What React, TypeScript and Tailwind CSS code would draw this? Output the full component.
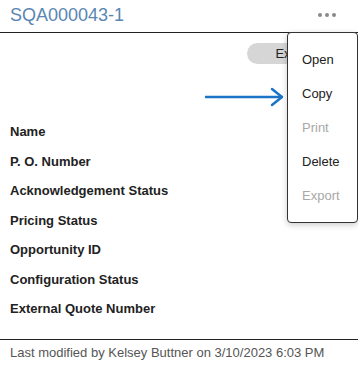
import React from 'react';

const fields = [
  'Name',
  'P. O. Number',
  'Acknowledgement Status',
  'Pricing Status',
  'Opportunity ID',
  'Configuration Status',
  'External Quote Number',
];

const menuItems = [
  { label: 'Open', disabled: false },
  { label: 'Copy', disabled: false },
  { label: 'Print', disabled: true },
  { label: 'Delete', disabled: false },
  { label: 'Export', disabled: true },
];

const App: React.FC = () => {
  return (
    <div className="relative w-[358px] h-[380px] bg-white overflow-hidden font-['Liberation_Sans',Arial,sans-serif]">
      {/* Header */}
      <div className="flex items-center justify-between h-[33px] pl-[10px] pr-[22px] border-b border-[#222]">
        <span className="text-[18px] leading-[22px] text-[#5a86b2] -mt-[2px]">SQA000043-1</span>
        <div className="flex gap-[3px] -mt-[2px]">
          <span className="w-[4px] h-[4px] rounded-full bg-[#8a8a8a]" />
          <span className="w-[4px] h-[4px] rounded-full bg-[#8a8a8a]" />
          <span className="w-[4px] h-[4px] rounded-full bg-[#8a8a8a]" />
        </div>
      </div>

      {/* Body */}
      <div className="pt-[10px] pb-[15px]">
        <div className="flex justify-end pr-[10px]">
          <div className="w-[101px] h-[21px] rounded-full bg-[#d6d6d6] flex items-center justify-center text-[13px] text-[#222]">
            Expand
          </div>
        </div>
        <div className="mt-[53px] flex flex-col pl-[10px]">
          {fields.map((f) => (
            <div key={f} className="h-[29.5px] flex items-center text-[13px] font-bold text-[#222]">
              {f}
            </div>
          ))}
        </div>
      </div>

      {/* Footer */}
      <div className="border-t border-[#222] px-[10px] pt-[5px] text-[13px] leading-[16px] text-[#555]">
        Last modified by Kelsey Buttner on 3/10/2023 6:03 PM
      </div>

      {/* Arrow annotation */}
      <svg className="absolute left-[204px] top-[87px]" width="82" height="20" viewBox="0 0 82 20">
        <path d="M1 10 H78" stroke="#1b74c6" strokeWidth="2.5" fill="none" />
        <path d="M68 2 L78 10 L68 18" stroke="#1b74c6" strokeWidth="2.5" fill="none" strokeLinecap="round" strokeLinejoin="round" />
      </svg>

      {/* Dropdown menu */}
      <div className="absolute left-[287px] top-[32px] w-[71px] h-[191px] bg-white border border-[#333] rounded-[4px] shadow-[0_2px_6px_rgba(0,0,0,0.2)] pt-[10px]">
        {menuItems.map((m) => (
          <div
            key={m.label}
            className={`h-[34px] flex items-center pl-[14px] text-[13px] ${m.disabled ? 'text-[#a8a8a8]' : 'text-[#222]'}`}
          >
            {m.label}
          </div>
        ))}
      </div>
    </div>
  );
};

export default App;
